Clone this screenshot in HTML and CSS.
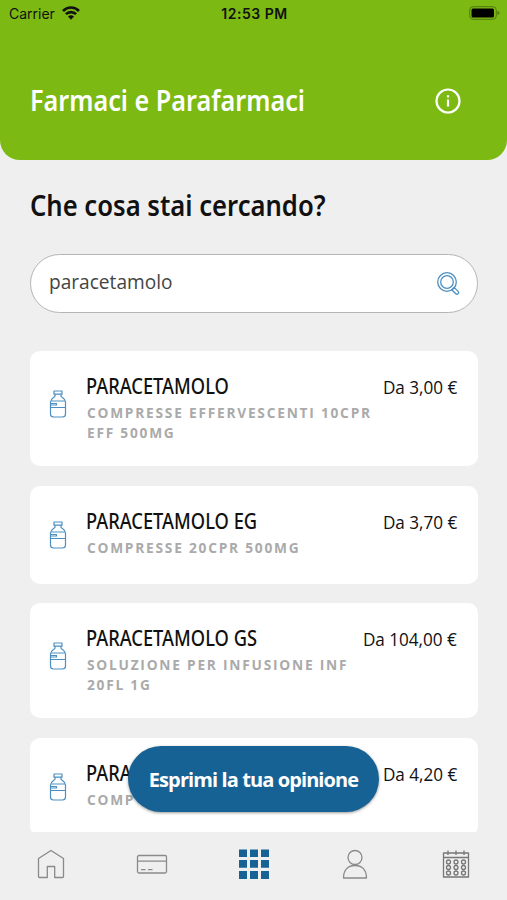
FILE: index.html
```
<!DOCTYPE html>
<html lang="it">

<head>
  <meta charset="UTF-8">
  <meta name="viewport" content="width=device-width, initial-scale=1.0">
  <title>Farmaci e Parafarmaci</title>
  <link rel="stylesheet" href="styles.css">
</head>

<body>

  <svg class="sprite">
    <symbol id="bottle" viewBox="0 0 18 28">
      <path d="M5 1h8v3.200H5zM6 4.200v2C5 8 1.500 8.500 1.500 12v12a3 3 0 0 0 3 3h9a3 3 0 0 0 3-3V12c0-3.500-3.500-4-4.500-5.800v-2M1.500 11h15M1.500 17.500h15M1.500 13.500h6v1.500h-6" />
    </symbol>
  </svg>

  <div class="screen">
    <header class="header">
      <div class="status-bar">
        <div class="carrier">
          <span>Carrier</span>
          <svg class="wifi" viewBox="0 0 18 14">
            <path d="M1 5a11 11 0 0 1 16 0M3.900 8.200a7.200 7.200 0 0 1 10.200 0" />
            <path class="dot" d="M9 13.800l-3-3.200a4.200 4.200 0 0 1 6 0z" />
          </svg>
        </div>
        <div class="time">12:53 PM</div>
        <svg class="battery" viewBox="0 0 31 14">
          <rect class="shell" x=".7" y=".7" width="26.600" height="12.600" rx="3.500" />
          <rect x="2.500" y="2.500" width="22.500" height="9" rx="1.500" />
          <path class="cap" d="M28.500 4.700q2 .8 2 2.300t-2 2.300z" />
        </svg>
      </div>
      <div class="title-row">
        <h1>Farmaci e Parafarmaci</h1>
        <svg class="info" viewBox="0 0 26 26">
          <circle cx="13" cy="13" r="11.500" />
          <path d="M13 11.500v7M13 7.300v2.200" />
        </svg>
      </div>
    </header>

    <main class="main">
      <h2>Che cosa stai cercando?</h2>
      <div class="search">
        <span>paracetamolo</span>
        <svg class="search-icon" viewBox="0 0 24 24">
          <circle cx="11" cy="11" r="9.300" />
          <circle cx="11" cy="11" r="6.300" />
          <path d="M15.800 18.700l2.300-2.300 4 4a1.600 1.600 0 0 1-2.300 2.300z" />
        </svg>
      </div>

      <div class="card">
        <svg class="bottle"><use href="#bottle" /></svg>
        <div class="info-text">
          <h3>PARACETAMOLO</h3>
          <p>COMPRESSE EFFERVESCENTI 10CPR<br>EFF 500MG</p>
        </div>
        <div class="price">Da 3,00 €</div>
      </div>

      <div class="card short">
        <svg class="bottle"><use href="#bottle" /></svg>
        <div class="info-text">
          <h3>PARACETAMOLO EG</h3>
          <p>COMPRESSE 20CPR 500MG</p>
        </div>
        <div class="price">Da 3,70 €</div>
      </div>

      <div class="card">
        <svg class="bottle"><use href="#bottle" /></svg>
        <div class="info-text">
          <h3>PARACETAMOLO GS</h3>
          <p>SOLUZIONE PER INFUSIONE INF<br>20FL 1G</p>
        </div>
        <div class="price">Da 104,00 €</div>
      </div>

      <div class="card short">
        <svg class="bottle"><use href="#bottle" /></svg>
        <div class="info-text">
          <h3>PARA</h3>
          <p>COMP</p>
        </div>
        <div class="price">Da 4,20 €</div>
      </div>

      <button class="feedback">Esprimi la tua opinione</button>
    </main>

    <nav class="tabs">
      <svg viewBox="0 0 32 32">
        <path d="M3.500 10.500L16 2.500l12.500 8v18a1 1 0 0 1-1 1h-7.800V18.500h-7.400v11H4.500a1 1 0 0 1-1-1z" />
      </svg>
      <svg viewBox="0 0 32 32">
        <rect x="1.500" y="7.500" width="29" height="17.500" rx="1.500" />
        <path d="M1.500 13.200h29M5 21.700h4.500M12 21.700h4.500" />
      </svg>
      <svg class="active" viewBox="0 0 32 32">
        <path d="M1 1.500h8V9H1zM12 1.500h8V9h-8zM23 1.500h8V9h-8zM1 12h8v7.800H1zM12 12h8v7.800h-8zM23 12h8v7.800h-8zM1 23h8v8H1zM12 23h8v8h-8zM23 23h8v8h-8z" />
      </svg>
      <svg viewBox="0 0 32 32">
        <circle cx="16" cy="9.500" r="7" />
        <path d="M4.500 30c0-8 4.500-12.500 11.500-12.500S27.500 22 27.500 30z" />
      </svg>
      <svg class="calendar" viewBox="0 0 32 32">
        <path d="M3.500 5h25v24h-25zM3.500 9.500h25M8 2.500v4.500M16 2.500v4.500M24 2.500v4.500" />
        <circle cx="8.500" cy="14" r="2" /><circle cx="16" cy="14" r="2" /><circle cx="23.500" cy="14" r="2" />
        <circle cx="8.500" cy="19.500" r="2" /><circle cx="16" cy="19.500" r="2" /><circle cx="23.500" cy="19.500" r="2" />
        <circle cx="8.500" cy="25" r="2" /><circle cx="16" cy="25" r="2" /><circle cx="23.500" cy="25" r="2" />
      </svg>
    </nav>
  </div>

</body>

</html>
```

FILE: styles.css
```
* {
  margin: 0;
  padding: 0;
  box-sizing: border-box;
}

body {
  font-family: "Open Sans", "Noto Sans", sans-serif;
  background: #efefef;
  color: #111;
}

svg {
  display: block;
  flex: none;
  fill: none;
  stroke-linejoin: round;
}

.sprite {
  display: none;
}

.screen {
  display: flex;
  flex-direction: column;
  height: 900px;
  overflow: hidden;
}

.header {
  height: 160px;
  flex: none;
  background: #7cb912;
  border-radius: 0 0 20px 20px;
}

.status-bar {
  display: grid;
  grid-template-columns: 1fr auto 1fr;
  align-items: center;
  height: 27px;
  padding: 0 7px 0 9px;
  font-family: Inter, Roboto, sans-serif;
  font-size: 14px;
}

.carrier {
  display: flex;
  align-items: center;
  gap: 7px;
}

.wifi {
  width: 18px;
  height: 14px;
  margin-top: -2px;
  stroke: #111;
  stroke-width: 2.6;
}

.wifi .dot {
  fill: #111;
  stroke: none;
}

.time {
  font-weight: 600;
  letter-spacing: .5px;
}

.battery {
  width: 31px;
  height: 14px;
  margin-top: -1px;
  justify-self: end;
  fill: #000;
}

.battery .shell {
  fill: none;
  stroke: #4f7a10;
}

.battery .cap {
  fill: #4f7a10;
}

.title-row {
  display: flex;
  align-items: center;
  justify-content: space-between;
  height: 148px;
  padding: 0 46px 0 30px;
}

/* condensed look for the titles */
h1,
h2,
h3 {
  font-family: "Noto Sans", sans-serif;
  transform: scaleX(.9);
  transform-origin: left;
  white-space: nowrap;
}

h1 {
  margin-top: -2px;
  font-size: 28px;
  font-weight: 600;
  color: #fff;
}

.info {
  width: 26px;
  height: 26px;
  stroke: #fff;
  stroke-width: 2.2;
}

.main {
  position: relative;
  height: 672px;
  flex: none;
  padding: 26px 29px 0 30px;
  overflow: hidden;
}

h2 {
  height: 38px;
  line-height: 38px;
  font-size: 28px;
  font-weight: 600;
  transform: scaleX(.915);
}

.search {
  display: flex;
  align-items: center;
  justify-content: space-between;
  height: 59px;
  margin: 30px 0 38px;
  padding: 0 17px 0 18px;
  background: #fff;
  border: 1.500px solid #b5b5b5;
  border-radius: 30px;
  font-size: 20px;
  color: #444;
}

.search span {
  margin-top: -5px;
  transform: scaleX(.955);
  transform-origin: left;
}

.search-icon {
  width: 24px;
  height: 24px;
  margin-top: -1px;
  stroke: #4c8fc0;
  stroke-width: 1.3;
}

.card {
  display: flex;
  align-items: flex-start;
  height: 115px;
  margin-bottom: 20px;
  padding: 21px 21px 0 20px;
  background: #fff;
  border-radius: 10px;
}

.card.short {
  height: 98px;
  margin-bottom: 19px;
}

.bottle {
  width: 18px;
  height: 28px;
  margin: 18px 0 0 -1px;
  stroke: #4c8fc0;
  stroke-width: 1.2;
}

.short .bottle {
  margin-top: 14px;
}

.info-text {
  flex: 1;
  min-width: 0;
  margin-left: 19px;
}

h3 {
  line-height: 28px;
  font-size: 21px;
  font-weight: 500;
  transform: scaleX(.87);
}

.card p {
  padding: 3px 0 0 1px;
  line-height: 19.500px;
  font-size: 14px;
  font-weight: 700;
  letter-spacing: 1.8px;
  color: #aaa;
  transform: scaleX(.98);
  transform-origin: left;
  white-space: nowrap;
}

.price {
  line-height: 30px;
  font-size: 18px;
  transform: scaleX(.95);
  transform-origin: right;
  white-space: nowrap;
}

/* floats above the list */
.feedback {
  position: absolute;
  left: 128px;
  bottom: 20px;
  width: 251px;
  height: 66px;
  border: 0;
  border-radius: 33px;
  background: #176294;
  box-shadow: 0 1px 3px rgba(0, 0, 0, .4);
  font: 700 20px "Open Sans", sans-serif;
  letter-spacing: -.9px;
  color: #fff;
  white-space: nowrap;
}

.tabs {
  display: flex;
  justify-content: space-between;
  padding: 16px 35px 0;
}

.tabs svg {
  width: 32px;
  height: 32px;
  stroke: #8a8a8a;
  stroke-width: 1.3;
}

.tabs .calendar {
  stroke: #777;
}

.tabs .active {
  fill: #176294;
  stroke: none;
}
```
